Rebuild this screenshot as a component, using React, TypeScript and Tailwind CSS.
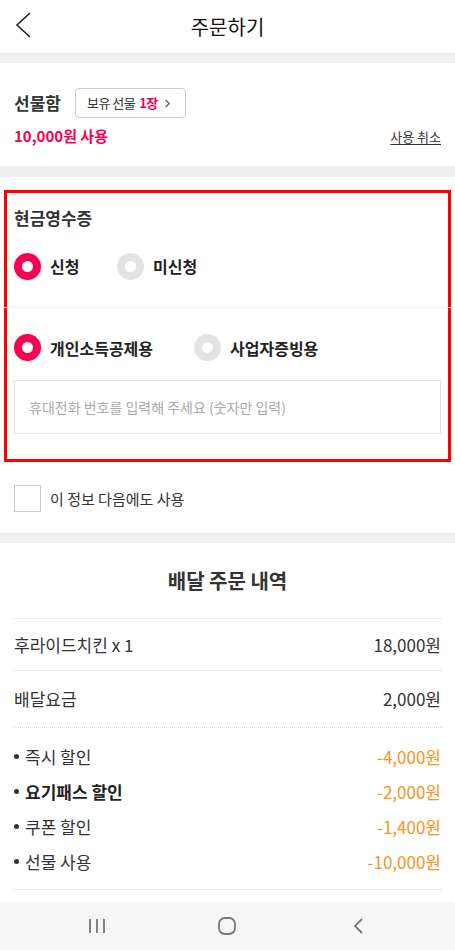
import { ChevronRight } from "lucide-react";

const font = { fontFamily: '"Noto Sans CJK KR", "Noto Sans", sans-serif' };

function Radio({ on, label }: { on: boolean; label: string }) {
  return (
    <div className="flex items-center gap-[9px]">
      <span
        className={`w-[27px] h-[27px] rounded-full flex items-center justify-center ${on ? "bg-[#fa0050]" : "bg-[#e3e3e3]"}`}
      >
        <span className="w-[11px] h-[11px] rounded-full bg-white" />
      </span>
      <span className="text-[16px] font-bold text-[#222]">{label}</span>
    </div>
  );
}

function Dotted() {
  return <div className="border-t border-dotted border-[#d8d8d8]" />;
}

const discounts = [
  { label: "즉시 할인", value: "-4,000원", bold: false },
  { label: "요기패스 할인", value: "-2,000원", bold: true },
  { label: "쿠폰 할인", value: "-1,400원", bold: false },
  { label: "선물 사용", value: "-10,000원", bold: false },
];

export default function App() {
  return (
    <div className="w-[455px] h-[950px] bg-white flex flex-col overflow-hidden text-[#222]" style={font}>
      {/* Header */}
      <div className="h-[53px] relative flex items-center justify-center shrink-0">
        <svg width="20" height="26" viewBox="0 0 20 26" className="absolute left-[14px] top-[12px] text-[#222]">
          <path d="M16 1L3 13l13 12" fill="none" stroke="currentColor" strokeWidth="1.6" />
        </svg>
        <span className="text-[20px] text-[#111]">주문하기</span>
      </div>
      <div className="h-[10px] bg-[#efefef] shrink-0" />

      {/* 선물함 */}
      <div className="h-[103px] px-[14px] pt-[25px] shrink-0">
        <div className="flex items-center gap-[14px]">
          <span className="text-[17px] font-bold text-[#333]">선물함</span>
          <div className="h-[30px] px-[11px] border border-[#ccc] rounded-[4px] flex items-center text-[13px] tracking-[-0.5px] text-[#333]">
            <span>보유 선물</span>
            <span className="font-bold text-[#fa0050] ml-[4px]">1장</span>
            <ChevronRight className="w-[13px] h-[13px] text-[#555] ml-[3px]" strokeWidth={2} />
          </div>
        </div>
        <div className="flex items-center justify-between mt-[7px]">
          <span className="text-[15px] font-bold text-[#fa0050]">10,000원 사용</span>
          <span className="text-[13px] text-[#333] underline underline-offset-2">사용 취소</span>
        </div>
      </div>
      <div className="h-[11px] bg-[#efefef] shrink-0" />

      {/* 현금영수증 */}
      <div className="pt-[13px] shrink-0">
        <div className="mx-[4px] border-[3px] border-[#ff0000] h-[272px]">
          <div className="px-[7px] pt-[12px] h-[114px]">
            <div className="text-[17px] font-bold text-[#333]">현금영수증</div>
            <div className="flex items-center mt-[22px]">
              <div className="w-[103px]">
                <Radio on label="신청" />
              </div>
              <Radio on={false} label="미신청" />
            </div>
          </div>
          <div className="border-t border-[#ececec] -mx-[4px]" />
          <div className="px-[7px] pt-[26px]">
            <div className="flex items-center">
              <div className="w-[180px]">
                <Radio on label="개인소득공제용" />
              </div>
              <Radio on={false} label="사업자증빙용" />
            </div>
            <div className="mt-[19px] h-[54px] border border-[#e2e2e2] flex items-center px-[14px] text-[14px] text-[#aaa]">
              휴대전화 번호를 입력해 주세요 (숫자만 입력)
            </div>
          </div>
        </div>
      </div>

      {/* 체크박스 */}
      <div className="h-[71px] px-[14px] pt-[23px] flex items-start gap-[9px] shrink-0">
        <span className="w-[27px] h-[27px] border border-[#ccc] bg-white" />
        <span className="text-[15px] text-[#333] leading-[27px]">이 정보 다음에도 사용</span>
      </div>
      <div className="h-[10px] bg-[#efefef] shrink-0" />

      {/* 배달 주문 내역 */}
      <div className="flex-1 px-[14px] flex flex-col">
        <div className="h-[75px] flex items-center justify-center text-[20px] font-bold text-[#333]">배달 주문 내역</div>
        <Dotted />
        <div className="h-[51px] flex items-center justify-between text-[17px] text-[#333]">
          <span>후라이드치킨 x 1</span>
          <span>18,000원</span>
        </div>
        <Dotted />
        <div className="h-[56px] flex items-center justify-between text-[17px] text-[#333]">
          <span>배달요금</span>
          <span>2,000원</span>
        </div>
        <Dotted />
        <div className="pt-[11px] pb-[10px] flex flex-col">
          {discounts.map((d) => (
            <div key={d.label} className="h-[35px] flex items-center justify-between text-[17px]">
              <span className={`flex items-center gap-[6px] ${d.bold ? "font-bold text-[#222]" : "text-[#333]"}`}>
                <span className="w-[5px] h-[5px] rounded-full bg-[#333]" />
                {d.label}
              </span>
              <span className="text-[#f7931e]">{d.value}</span>
            </div>
          ))}
        </div>
        <Dotted />
      </div>

      {/* Android nav bar */}
      <div className="h-[48px] bg-[#f6f6f6] grid grid-cols-3 px-[32px] shrink-0">
        <div className="flex items-center justify-center">
          <svg width="18" height="16" viewBox="0 0 18 16" className="text-[#777]">
            <path d="M2 1v14M9 1v14M16 1v14" stroke="currentColor" strokeWidth="1.8" />
          </svg>
        </div>
        <div className="flex items-center justify-center">
          <svg width="20" height="20" viewBox="0 0 20 20" className="text-[#777]">
            <rect x="2" y="2" width="16" height="16" rx="6" fill="none" stroke="currentColor" strokeWidth="1.8" />
          </svg>
        </div>
        <div className="flex items-center justify-center">
          <svg width="14" height="18" viewBox="0 0 14 18" className="text-[#777]">
            <path d="M11 2L4 9l7 7" fill="none" stroke="currentColor" strokeWidth="1.8" />
          </svg>
        </div>
      </div>
    </div>
  );
}
